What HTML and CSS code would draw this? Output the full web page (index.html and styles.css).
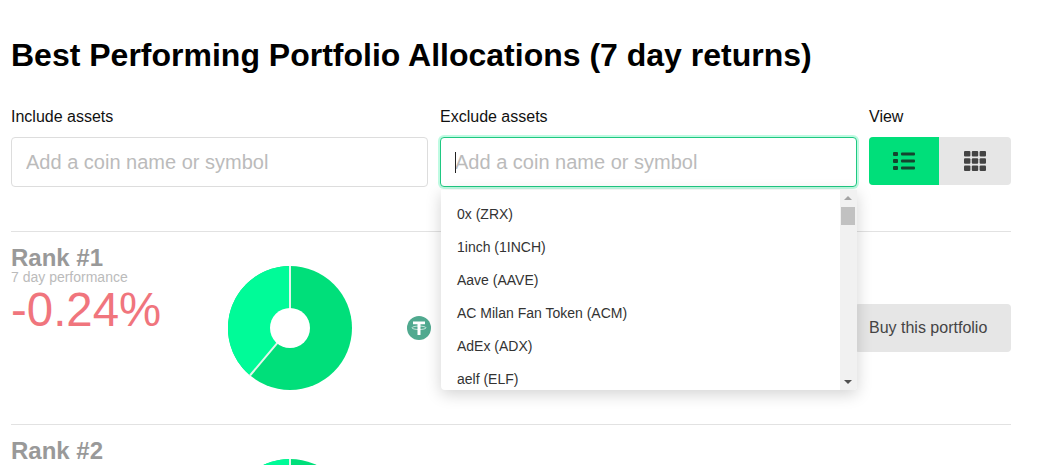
FILE: index.html
```html
<!DOCTYPE html>
<html lang="en">
<head>
    <meta charset="UTF-8">
    <title>Best Performing Portfolio Allocations</title>
    <link rel="stylesheet" href="styles.css">
</head>
<body>
    <div class="container">
        <h1 class="page-title">Best Performing Portfolio Allocations (7 day returns)</h1>

        <!-- filters -->
        <div class="filters">
            <div class="field">
                <label class="field-label">Include assets</label>
                <input class="coin-input" type="text" placeholder="Add a coin name or symbol">
            </div>
            <div class="field">
                <label class="field-label">Exclude assets</label>
                <div class="input-wrap">
                    <input class="coin-input coin-input-active" type="text" placeholder="Add a coin name or symbol">
                    <span class="caret"></span>
                    <div class="dropdown">
                        <ul class="coin-list">
                            <li>0x (ZRX)</li>
                            <li>1inch (1INCH)</li>
                            <li>Aave (AAVE)</li>
                            <li>AC Milan Fan Token (ACM)</li>
                            <li>AdEx (ADX)</li>
                            <li>aelf (ELF)</li>
                        </ul>
                        <div class="scrollbar">
                            <span class="arrow-up"></span>
                            <span class="scroll-thumb"></span>
                            <span class="arrow-down"></span>
                        </div>
                    </div>
                </div>
            </div>
            <div class="field">
                <label class="field-label">View</label>
                <div class="view-toggle">
                    <button class="view-btn view-btn-active" aria-label="List view">
                        <svg width="22" height="18" viewBox="0 0 22 18" fill="#14452e">
                            <rect x="0" y="0" width="5" height="4" rx="1"/>
                            <rect x="0" y="7" width="5" height="4" rx="1"/>
                            <rect x="0" y="14" width="5" height="4" rx="1"/>
                            <rect x="8" y="0.5" width="14" height="3" rx="1"/>
                            <rect x="8" y="7.500" width="14" height="3" rx="1"/>
                            <rect x="8" y="14.500" width="14" height="3" rx="1"/>
                        </svg>
                    </button>
                    <button class="view-btn" aria-label="Grid view">
                        <svg width="22" height="20" viewBox="0 0 22 20" fill="#444">
                            <rect x="0" y="0" width="6.400" height="5.600" rx="1"/>
                            <rect x="7.800" y="0" width="6.400" height="5.600" rx="1"/>
                            <rect x="15.600" y="0" width="6.400" height="5.600" rx="1"/>
                            <rect x="0" y="7.200" width="6.400" height="5.600" rx="1"/>
                            <rect x="7.800" y="7.200" width="6.400" height="5.600" rx="1"/>
                            <rect x="15.600" y="7.200" width="6.400" height="5.600" rx="1"/>
                            <rect x="0" y="14.400" width="6.400" height="5.600" rx="1"/>
                            <rect x="7.800" y="14.400" width="6.400" height="5.600" rx="1"/>
                            <rect x="15.600" y="14.400" width="6.400" height="5.600" rx="1"/>
                        </svg>
                    </button>
                </div>
            </div>
        </div>

        <!-- portfolios -->
        <div class="rank-row">
            <div class="rank-info">
                <div class="rank-title">Rank #1</div>
                <div class="rank-sub">7 day performance</div>
                <div class="rank-perf">-0.24%</div>
            </div>
            <svg class="donut" width="124" height="124" viewBox="0 0 124 124">
                <circle cx="62" cy="62" r="62" fill="#00df7a"/>
                <path d="M62 62 L62 0 A62 62 0 0 0 22 109.500 Z" fill="#00fb98"/>
                <path d="M62 0 L62 62 L22 109.500" fill="none" stroke="#e4f5ec" stroke-width="2"/>
                <circle cx="62" cy="62" r="20" fill="#fff"/>
            </svg>
            <div class="coin-icons">
                <svg width="24" height="24" viewBox="0 0 24 24">
                    <circle cx="12" cy="12" r="12" fill="#50a98f"/>
                    <path d="M6 5.500h12v2.800h-4.500V19h-3V8.300H6z" fill="#fff"/>
                    <ellipse cx="12" cy="11.800" rx="7" ry="1.700" fill="none" stroke="#fff" stroke-width="0.900" opacity="0.750"/>
                </svg>
            </div>
            <button class="buy-btn">Buy this portfolio</button>
        </div>
        <div class="rank-row">
            <div class="rank-info">
                <div class="rank-title">Rank #2</div>
            </div>
            <svg class="donut" width="124" height="124" viewBox="0 0 124 124">
                <circle cx="62" cy="62" r="62" fill="#00df7a"/>
                <path d="M62 62 L62 0 A62 62 0 0 0 22 109.500 Z" fill="#00fb98"/>
                <path d="M62 0 L62 62" fill="none" stroke="#e4f5ec" stroke-width="2"/>
                <circle cx="62" cy="62" r="20" fill="#fff"/>
            </svg>
        </div>
    </div>
</body>
</html>
```

FILE: styles.css
```css
* {
    margin: 0;
    padding: 0;
    box-sizing: border-box;
}

html, body {
    height: 465px;
    overflow: hidden;
}

body {
    font-family: "Liberation Sans", Arial, sans-serif;
    background: #ffffff;
    color: #111111;
}

.container {
    width: 1000px;
    margin-left: 11px;
    padding-top: 37px;
}

.page-title {
    font-size: 32px;
    line-height: 36px;
    font-weight: bold;
    color: #000000;
}

/* filters */
.filters {
    display: grid;
    grid-template-columns: 417px 417px 142px;
    gap: 12px;
    margin-top: 35px;
}

.field-label {
    display: block;
    font-size: 16px;
    line-height: 18px;
    margin-bottom: 11px;
}

.input-wrap {
    position: relative;
}

.coin-input {
    display: block;
    width: 100%;
    height: 50px;
    padding: 0 14px;
    font-family: inherit;
    font-size: 20px;
    color: #333333;
    background: #ffffff;
    border: 1px solid #dddddd;
    border-radius: 4px;
    outline: none;
}

.coin-input::placeholder {
    color: #bbbbbb;
    opacity: 1;
}

.coin-input-active {
    border-color: #1fc882;
    box-shadow: 0 0 0 2px rgba(0, 240, 140, 0.25);
}

.caret {
    position: absolute;
    left: 15px;
    top: 15px;
    width: 1px;
    height: 21px;
    background: #222222;
}

/* coin dropdown */
.dropdown {
    position: absolute;
    top: 53px;
    left: 1px;
    right: 0;
    height: 200px;
    display: flex;
    background: #ffffff;
    border-radius: 0 0 4px 4px;
    box-shadow: 0 4px 16px rgba(0, 0, 0, 0.18);
    overflow: hidden;
    z-index: 5;
}

.coin-list {
    flex: 1;
    list-style: none;
    padding-top: 8px;
    overflow: hidden;
}

.coin-list li {
    height: 33px;
    line-height: 33px;
    padding-left: 16px;
    font-size: 14px;
    color: #333333;
}

.scrollbar {
    position: relative;
    width: 17px;
    background: #f1f1f1;
}

.arrow-up,
.arrow-down {
    position: absolute;
    left: 4px;
    width: 0;
    height: 0;
    border-left: 4px solid transparent;
    border-right: 4px solid transparent;
}

.arrow-up {
    top: 6px;
    border-bottom: 4px solid #a3a3a3;
}

.arrow-down {
    bottom: 6px;
    border-top: 4px solid #505050;
}

.scroll-thumb {
    position: absolute;
    top: 17px;
    left: 1px;
    width: 14px;
    height: 18px;
    background: #c1c1c1;
}

/* view toggle */
.view-toggle {
    display: flex;
    height: 48px;
    background: #e6e6e6;
    border-radius: 4px;
    overflow: hidden;
}

.view-btn {
    flex: 1;
    display: flex;
    align-items: center;
    justify-content: center;
    border: none;
    background: transparent;
}

.view-btn-active {
    flex: 0 0 70px;
    background: #00df7a;
}

/* portfolio rows */
.rank-row {
    display: flex;
    align-items: center;
    height: 193px;
    border-top: 1px solid #e2e2e2;
}

.filters + .rank-row {
    margin-top: 44px;
}

.rank-info {
    align-self: flex-start;
    width: 217px;
    padding-top: 13px;
}

.rank-title {
    font-size: 24px;
    line-height: 26px;
    font-weight: bold;
    color: #999999;
}

.rank-sub {
    font-size: 14px;
    line-height: 13px;
    color: #bbbbbb;
}

.rank-perf {
    margin-top: 1px;
    font-size: 47.400px;
    line-height: 50px;
    color: #f0757d;
}

.donut {
    flex-shrink: 0;
}

.coin-icons {
    flex: 1;
    display: flex;
    padding-left: 55px;
}

.buy-btn {
    width: 156px;
    height: 48px;
    padding-left: 14px;
    text-align: left;
    font-family: inherit;
    font-size: 16px;
    color: #444444;
    background: #e6e6e6;
    border: none;
    border-radius: 4px;
}
```
